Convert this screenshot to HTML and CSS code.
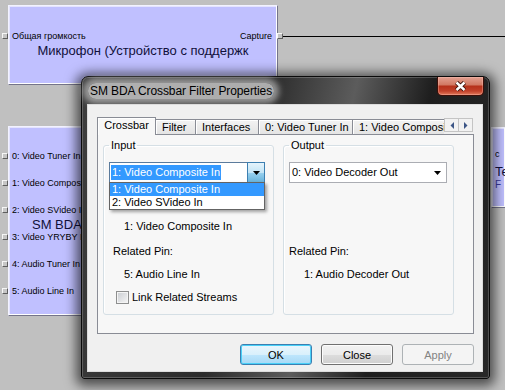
FILE: index.html
```html
<!DOCTYPE html>
<html lang="ru">
<head>
    <meta charset="UTF-8">
    <meta name="viewport" content="width=device-width, initial-scale=1.0">
    <title>SM BDA Crossbar Filter Properties</title>
    <link rel="stylesheet" href="styles.css">
</head>
<body>
    <!-- filter graph behind the dialog -->
    <div class="node node-mic">
        <div class="pin-row">
            <span class="pin pin-in"></span>
            <span class="pin-name">Общая громкость</span>
            <span class="spacer"></span>
            <span class="pin-name">Capture</span>
            <span class="pin pin-out"></span>
        </div>
        <div class="node-title">Микрофон (Устройство с поддержк</div>
    </div>
    <div class="wire"></div>

    <div class="node node-bda">
        <ul class="pin-list">
            <li><span class="pin pin-in"></span>0: Video Tuner In</li>
            <li><span class="pin pin-in"></span>1: Video Composite In</li>
            <li><span class="pin pin-in"></span>2: Video SVideo In</li>
            <li><span class="pin pin-in"></span>3: Video YRYBY In</li>
            <li><span class="pin pin-in"></span>4: Audio Tuner In</li>
            <li><span class="pin pin-in"></span>5: Audio Line In</li>
        </ul>
        <div class="node-title">SM BDA</div>
    </div>

    <div class="node node-tuner">
        <div class="pin-name tuner-pin">c</div>
        <div class="node-title">Te</div>
        <div class="node-sub">F</div>
    </div>

    <!-- property sheet -->
    <div class="window">
        <div class="titlebar">
            <span class="caption">SM BDA Crossbar Filter Properties</span>
            <span class="close-btn">
                <svg width="13" height="11" viewBox="0 0 13 11">
                    <path d="M2.5 1.5 L10.5 9 M10.5 1.5 L2.5 9" stroke="#3b1109" stroke-width="4.4" fill="none"/>
                    <path d="M2.5 1.5 L10.5 9 M10.5 1.5 L2.5 9" stroke="#fff" stroke-width="2.4" fill="none"/>
                </svg>
            </span>
        </div>

        <div class="client">
            <div class="tabstrip">
                <div class="tabs">
                    <span class="tab active" style="width: 59px">Crossbar</span>
                    <span class="tab" style="width: 41px">Filter</span>
                    <span class="tab" style="width: 64px">Interfaces</span>
                    <span class="tab" style="width: 95px">0: Video Tuner In</span>
                    <span class="tab" style="width: 120px">1: Video Composit</span>
                </div>
                <div class="tab-scroll">
                    <span class="scroll-btn">
                        <svg width="4" height="7" viewBox="0 0 4 7"><polygon points="4,0 4,7 0.5,3.5" fill="#3d5686"/></svg>
                    </span>
                    <span class="scroll-btn">
                        <svg width="4" height="7" viewBox="0 0 4 7"><polygon points="0,0 0,7 3.5,3.5" fill="#3d5686"/></svg>
                    </span>
                </div>
            </div>

            <div class="tab-page">
                <fieldset class="group">
                    <legend>Input</legend>
                    <div class="combo combo-open">
                        <span class="combo-text"><span class="selected-text">1: Video Composite In</span></span>
                        <span class="combo-btn">
                            <svg width="7" height="4" viewBox="0 0 7 4"><polygon points="0,0 7,0 3.5,4" fill="#000"/></svg>
                        </span>
                        <ul class="dropdown">
                            <li class="hot">1: Video Composite In</li>
                            <li>2: Video SVideo In</li>
                        </ul>
                    </div>
                    <div class="info indent first">1: Video Composite In</div>
                    <div class="info related">Related Pin:</div>
                    <div class="info indent">5: Audio Line In</div>
                    <label class="check-row">
                        <span class="checkbox"></span>
                        Link Related Streams
                    </label>
                </fieldset>

                <fieldset class="group">
                    <legend>Output</legend>
                    <div class="combo combo-wide">
                        <span class="combo-text">0: Video Decoder Out</span>
                        <span class="combo-btn plain">
                            <svg width="7" height="4" viewBox="0 0 7 4"><polygon points="0,0 7,0 3.5,4" fill="#000"/></svg>
                        </span>
                    </div>
                    <div class="info related out-related">Related Pin:</div>
                    <div class="info indent">1: Audio Decoder Out</div>
                </fieldset>
            </div>

            <div class="buttons">
                <button class="btn default">OK</button>
                <button class="btn">Close</button>
                <button class="btn" disabled>Apply</button>
            </div>
        </div>
    </div>
</body>
</html>
```

FILE: styles.css
```css
body {
    margin: 0;
    width: 505px;
    height: 390px;
    overflow: hidden;
    position: relative;
    background-color: #c0c0c0;
    font-family: "Liberation Sans", Arial, sans-serif;
    font-size: 11px;
    color: #000;
}

/* graph nodes */
.node {
    position: absolute;
    box-sizing: border-box;
    background-color: #c0c0ff;
    border: 1px solid;
    border-color: #f2f2ff #74748a #74748a #f2f2ff;
    box-shadow: inset -1px -1px 0 #fff, inset 1px 1px 0 #e4e4ff;
    font-size: 9px;
}
.node-mic {
    left: 8px;
    top: 5px;
    width: 270px;
    height: 80px;
}
.node-bda {
    left: 8px;
    top: 126px;
    width: 80px;
    height: 190px;
    display: grid;
    overflow: hidden;
}
.node-tuner {
    left: 491px;
    top: 127px;
    width: 14px;
    height: 81px;
    padding-left: 3px;
    overflow: hidden;
    border-right: 0;
}
.pin {
    display: block;
    flex: none;
    width: 6px;
    height: 6px;
    box-sizing: border-box;
    background-color: #c6c6c6;
    border: 1px solid;
    border-color: #f6f6f6 #5e5e5e #5e5e5e #f6f6f6;
}
.pin-in {
    margin-left: -7px;
    margin-right: 4px;
}
.pin-out {
    margin-left: 5px;
    margin-right: -6px;
}
.pin-row {
    display: flex;
    align-items: center;
    height: 12px;
    margin-top: 24px;
}
.spacer {
    flex: 1;
}
.node-title {
    font-size: 13px;
    line-height: 16px;
    color: #10103a;
    white-space: nowrap;
}
.node-mic .node-title {
    margin-top: 1px;
    text-align: center;
}
.pin-list {
    grid-area: 1 / 1;
    list-style: none;
    margin: 0;
    padding: 15px 0 0;
}
.pin-list li {
    display: flex;
    align-items: center;
    height: 27px;
    white-space: nowrap;
}
.node-bda .pin {
    margin-left: 0;
}
.node-bda .pin-list {
    margin-left: -7px;
}
.node-bda {
    overflow: visible;
    clip-path: inset(0 0 0 -8px);
}
.node-bda .node-title {
    grid-area: 1 / 1;
    align-self: start;
    margin-top: 90px;
    padding-left: 23px;
}
.tuner-pin {
    margin-top: 21px;
    line-height: 10px;
}
.node-tuner .node-title {
    margin-top: 5px;
}
.node-sub {
    font-size: 10px;
    line-height: 10px;
    color: #3a3aa0;
}
.wire {
    position: absolute;
    left: 283px;
    top: 36px;
    width: 222px;
    height: 1px;
    background-color: #000;
}

/* dialog window */
.window {
    position: absolute;
    left: 81px;
    top: 76px;
    width: 409px;
    height: 303px;
    box-sizing: border-box;
    display: flex;
    flex-direction: column;
    padding: 0 6px 6px 5px;
    border: 1px solid #0a0a0a;
    border-radius: 7px 7px 3px 3px;
    background: linear-gradient(103deg, #3e3e3e 0%, #2c2c2c 40%, #5c5c5c 58%, #1e1e1e 74%, #282828 100%);
    box-shadow: inset 0 0 0 1px rgba(255, 255, 255, 0.2), 0 2px 12px 5px rgba(0, 0, 0, 0.6);
}
.titlebar {
    flex: none;
    height: 27px;
    display: flex;
    justify-content: space-between;
    align-items: flex-start;
}
.caption {
    margin: 6px 0 0 1px;
    padding: 0 2px;
    font-size: 12px;
    line-height: 16px;
    letter-spacing: -0.1px;
    color: #000;
    background-color: rgba(205, 205, 205, 0.8);
    border-radius: 8px;
    box-shadow: 0 0 6px 5px rgba(205, 205, 205, 0.65);
}
.close-btn {
    width: 47px;
    height: 19px;
    box-sizing: border-box;
    margin-right: -1px;
    display: flex;
    align-items: center;
    justify-content: center;
    border: 1px solid #3c0f08;
    border-top: 0;
    border-radius: 0 0 5px 5px;
    background: linear-gradient(#e3a192 0%, #d27a64 42%, #b6321b 52%, #c2412a 78%, #e27a5c 100%);
    box-shadow: inset 0 0 0 1px rgba(255, 200, 190, 0.35);
}
.client {
    flex: 1;
    display: flex;
    flex-direction: column;
    padding: 12px 8px 6px 9px;
    border: 1px solid #dcdcdc;
    background-color: #f0f0f0;
}

/* tabs */
.tabstrip {
    display: flex;
    height: 18px;
    margin-bottom: -1px;
    position: relative;
    z-index: 1;
}
.tabs {
    display: flex;
    align-items: flex-end;
    width: 347px;
    overflow: hidden;
}
.tab {
    flex: none;
    box-sizing: border-box;
    height: 15px;
    margin-bottom: 1px;
    margin-left: -1px;
    border: 1px solid #898c95;
    border-bottom: 0;
    background: linear-gradient(#f3f3f3, #e4e4e4);
    box-shadow: inset 1px 1px 0 #fff;
    text-align: left;
    padding-left: 6px;
    line-height: 14px;
    white-space: nowrap;
}
.tab:first-child {
    margin-left: 0;
}
.tab.active {
    height: 18px;
    margin-bottom: 0;
    position: relative;
    z-index: 1;
    background: #f7f7f7;
    line-height: 15px;
    text-align: center;
    padding-left: 0;
}
.tab-scroll {
    display: flex;
    margin: 1px 0 0 1px;
}
.scroll-btn {
    width: 15px;
    height: 14px;
    box-sizing: border-box;
    display: flex;
    align-items: center;
    justify-content: center;
    border: 1px solid #c4c4c4;
    background-color: #f2f2f2;
    margin-left: -1px;
}
.tab-page {
    height: 200px;
    box-sizing: border-box;
    display: flex;
    gap: 9px;
    padding: 0 5px;
    border: 1px solid #898c95;
    background-color: #f7f7f7;
}

/* group boxes */
.group {
    width: 171px;
    box-sizing: border-box;
    margin: 4px 0 18px;
    padding: 0 5px;
    border: 1px solid #d5dfe5;
    border-radius: 3px;
    box-shadow: inset 1px 1px 0 #fff;
}
.group legend {
    padding: 0 2px;
    line-height: 13px;
}
.combo {
    position: relative;
    display: flex;
    width: 156px;
    height: 21px;
    box-sizing: border-box;
    margin-top: 10px;
    border: 1px solid #abadb3;
    background-color: #fff;
}
.combo-wide {
    width: 158px;
}
.combo-open {
    border-color: #5b7b9c;
}
.combo-text {
    flex: 1;
    padding-left: 2px;
    line-height: 19px;
    white-space: nowrap;
}
.combo-open .combo-text {
    padding-left: 1px;
}
.selected-text {
    display: inline-block;
    padding: 0 1px;
    line-height: 15px;
    background-color: #3399ff;
    color: #fff;
}
.combo-btn {
    width: 18px;
    display: flex;
    align-items: center;
    justify-content: center;
    box-sizing: border-box;
    border: 1px solid #3c7fb1;
    margin: -1px -1px -1px 0;
    background: linear-gradient(#e5f4fc 0%, #c4e5f6 50%, #98d1ef 52%, #68b3db 100%);
}
.combo-btn.plain {
    width: 17px;
    border: 0;
    margin: 0;
    background: none;
}
.dropdown {
    position: absolute;
    top: 100%;
    left: -1px;
    width: 156px;
    box-sizing: border-box;
    margin: 0;
    padding: 0;
    list-style: none;
    border: 1px solid #646464;
    background-color: #fff;
    box-shadow: 2px 2px 3px rgba(0, 0, 0, 0.35);
}
.dropdown li {
    padding-left: 2px;
    line-height: 13px;
    white-space: nowrap;
}
.dropdown li.hot {
    background-color: #3399ff;
    color: #fff;
}
.info {
    line-height: 14px;
    margin-top: 9px;
    white-space: nowrap;
}
.info.first {
    margin-top: 36px;
}
.info.indent {
    padding-left: 15px;
}
.info.related {
    margin-top: 11px;
    padding-left: 4px;
}
.info.out-related {
    margin-top: 61px;
    padding-left: 0;
}
.check-row {
    display: flex;
    align-items: center;
    gap: 3px;
    height: 14px;
    margin-top: 9px;
    padding-left: 7px;
}
.checkbox {
    width: 13px;
    height: 13px;
    box-sizing: border-box;
    border: 1px solid #8e8f8f;
    background: linear-gradient(135deg, #c9ccd1, #f6f6f6);
    box-shadow: inset 0 0 0 1px #f4f4f4;
}

/* dialog buttons */
.buttons {
    display: flex;
    justify-content: flex-end;
    gap: 9px;
    margin-top: 10px;
}
.btn {
    width: 72px;
    height: 21px;
    padding: 0;
    font-family: inherit;
    font-size: 11px;
    color: #000;
    border: 1px solid #707070;
    border-radius: 3px;
    background: linear-gradient(#f2f2f2 0%, #ebebeb 50%, #dddddd 51%, #cfcfcf 100%);
    box-shadow: inset 0 0 0 1px #fcfcfc;
}
.btn.default {
    border-color: #3c7fb1;
    background: linear-gradient(#eaf6fd 0%, #d9f0fc 50%, #bee6fd 51%, #a7d9f5 100%);
    box-shadow: inset 0 0 0 1px #48d0f8;
}
.btn:disabled {
    color: #838383;
    border-color: #adb2b5;
    background: #f4f4f4;
    box-shadow: none;
}
```
